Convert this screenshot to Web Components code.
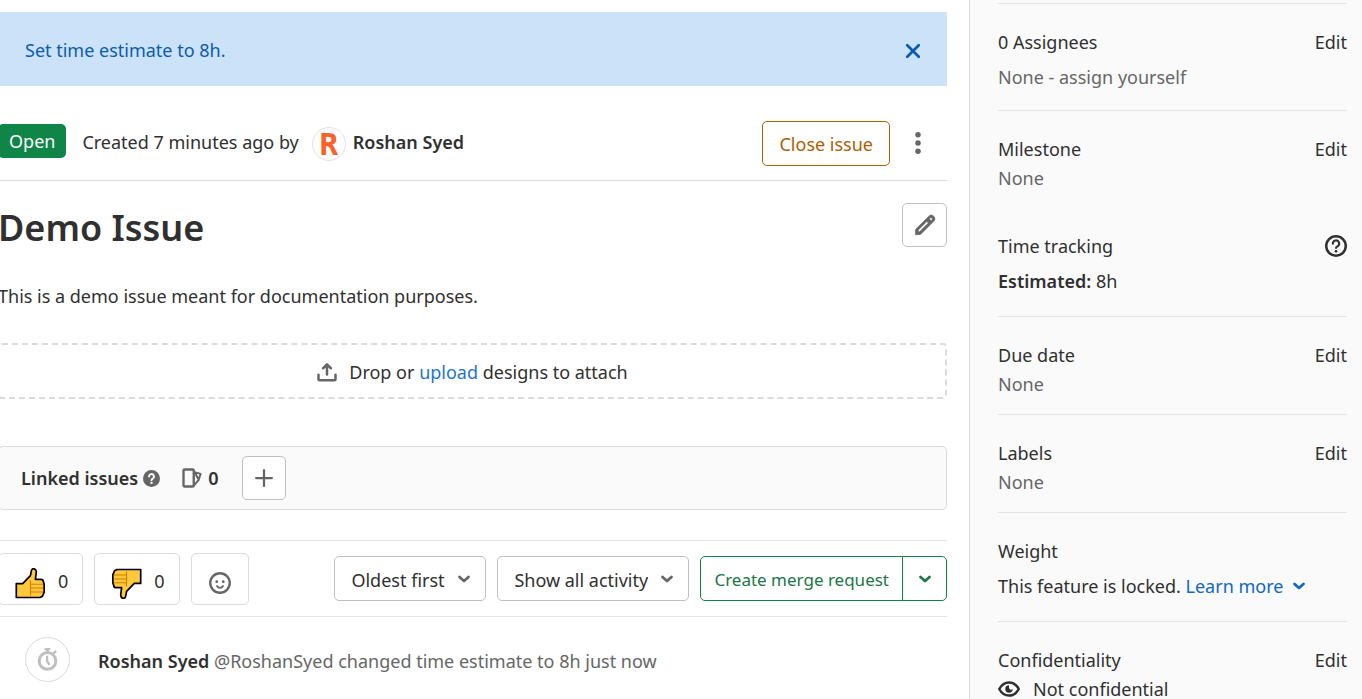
<!DOCTYPE html>
<html lang="en">
<head>
<meta charset="utf-8">
<title>Demo Issue</title>
<style>
  html, body { margin: 0; height: 100%; }
  body {
    overflow: hidden;
    background: #fff;
    color: #303030;
    font: 18px/28px "Noto Sans", "Open Sans", sans-serif;
  }
</style>
</head>
<body>
<issue-page></issue-page>

<script>
const define = (name, html, setup) => {
  const template = document.createElement('template');
  template.innerHTML = '<style>*{box-sizing:border-box}svg{display:block;flex:none}button,select{font:inherit;color:inherit;cursor:pointer}a{color:inherit;text-decoration:none}</style>' + html;
  customElements.define(name, class extends HTMLElement {
    constructor() {
      super();
      this.attachShadow({ mode: 'open' }).append(template.content.cloneNode(true));
      if (setup) setup(this, this.shadowRoot);
    }
  });
};

/* 16-unit icon set; every icon is drawn in currentColor */
const line = (d, w = 2) => `<path d="${d}" fill="none" stroke="currentColor" stroke-width="${w}" stroke-linecap="round" stroke-linejoin="round"/>`;
const icons = {
  close: line('M3.4 3.4l9.2 9.2M12.6 3.4l-9.2 9.2', 2.2),
  more: '<g fill="currentColor"><circle cx="8" cy="2" r="2"/><circle cx="8" cy="8" r="2"/><circle cx="8" cy="14" r="2"/></g>',
  pencil: '<path fill="currentColor" fill-rule="evenodd" d="M14.4 1.6a2.6 2.6 0 0 0-3.7 0L1.4 10.9a1.3 1.3 0 0 0-.4.9V15h3.2c.35 0 .67-.14.92-.38l9.28-9.3a2.6 2.6 0 0 0 0-3.7zM9.3 5.5l1.1 1.1-6.2 6.2-1.1.1.1-1.3zM12.4 2.7a1 1 0 1 1 0 2 1 1 0 0 1 0-2z" stroke="currentColor" stroke-width=".4"/>',
  upload: line('M1.2 10.2V13.6a1 1 0 0 0 1 1h11.6a1 1 0 0 0 1-1V10.2', 2) + line('M8 10V2.4M4.9 5L8 1.9 11.1 5', 2),
  help: '<circle cx="8" cy="8" r="8" fill="currentColor"/><path d="M5.7 6.2a2.3 2.3 0 1 1 3.5 1.9c-.8.5-1.2.8-1.2 1.5" fill="none" stroke="#fafafa" stroke-width="1.8" stroke-linecap="round"/><circle cx="8" cy="12.1" r="1.15" fill="#fafafa"/>',
  helpo: '<circle cx="8" cy="8" r="7.1" fill="none" stroke="currentColor" stroke-width="1.8"/>' + line('M5.7 6.3a2.3 2.3 0 1 1 3.5 1.9c-.8.5-1.2.7-1.2 1.3', 1.5) + '<circle cx="8" cy="11.9" r="1" fill="currentColor"/>',
  issues: line('M2 1.2h6.6a.8.8 0 0 1 .8.8v12a.8.8 0 0 1-.8.8H2a.8.8 0 0 1-.8-.8V2a.8.8 0 0 1 .8-.8z', 1.9) + line('M10 3.4l4.9 1.3-1.7 5-3.4 4M10.6 4.2l2.6 5', 1.6),
  plus: line('M8 1v14M1 8h14'),
  smile: '<circle cx="8" cy="8" r="7.1" fill="none" stroke="currentColor" stroke-width="1.7"/><circle cx="5.6" cy="7" r="1" fill="currentColor"/><circle cx="10.4" cy="7" r="1" fill="currentColor"/>' + line('M5.8 10.2c.6 1 1.3 1.3 2.2 1.3s1.6-.3 2.2-1.3', 1.3),
  chevron: line('M4.4 6.4l3.6 3.2 3.6-3.2', 2.2),
  eye: '<path d="M.9 8C2.6 4.9 5.1 3.2 8 3.2S13.4 4.9 15.1 8c-1.7 3.1-4.2 4.8-7.1 4.8S2.6 11.1.9 8z" fill="none" stroke="currentColor" stroke-width="1.8" stroke-linejoin="round"/><path fill="currentColor" d="M8 5.3a2.7 2.7 0 1 0 2.7 2.7A1.6 1.6 0 0 1 8 6.6z"/>',
  timer: '<circle cx="8" cy="9" r="5.8" fill="none" stroke="currentColor" stroke-width="2.1"/><path d="M6 0h4v1.4H9V3H7V1.4H6z" fill="currentColor"/>' + line('M12.6 3.4l.9-.9', 1.7) + line('M7.7 6v3.2l1.5 2', 1.6),
  thumb: '<path d="M1.3 15.6h6.4l7.7-7.9 1-5C16.8.8 18 .5 19.3.9c1.5.5 2 1.7 2 3.2l-.9 7.2h5.2c1.5 0 2.7.8 2.7 2.3l.8 2.3.1 8.3-1.7 4-2.5 1.3H1.3z" fill="#ffc83d" stroke="#000" stroke-width="1.7" stroke-linejoin="round"/><path d="M15.5 12.5v15M16 16.2h12M16 20h12M16 24h12" fill="none" stroke="#d67d00" stroke-width="1.1"/>'
};

define('ui-icon', '<style>:host{display:block;flex:none}</style><span></span>', (host, root) => {
  const name = host.getAttribute('name'), size = host.getAttribute('size') || 20;
  root.querySelector('span').innerHTML = `<svg width="${size}" height="${size}" viewBox="${name === 'thumb' ? '0 0 31 31' : '0 0 16 16'}" aria-hidden="true" style="display:block">${icons[name]}</svg>`;
});

define('alert-banner', `
<style>
  :host { display: flex; align-items: center; justify-content: space-between; min-height: 74px; padding: 2px 24px 0 27px; background: #cbe2f9; color: #0b5cad; }
  button { display: grid; padding: 2px 0 0; border: 0; background: none; }
</style>
<slot></slot><button aria-label="Dismiss"><ui-icon name="close" size="20"></ui-icon></button>`);

define('issue-header', `
<style>
  :host { display: flex; align-items: center; height: 95px; padding: 20px 18px 0 0; border-bottom: 1px solid #dbdbdb; }
  .badge { padding: 3px 11px; margin-bottom: 4px; border-radius: 5px; background: #108548; color: #fff; }
  .by { display: flex; align-items: center; flex: 1; margin: 0 0 2px 16px; }
  .avatar { display: grid; place-items: center; width: 34px; height: 34px; margin: 4px 7px 0 13px; border: 1px solid #e3e3e3; border-radius: 50%; background: #fdfdfd; color: #fc6026; font: bold 31px/32px "DejaVu Sans Mono", monospace; }
  .name { font-weight: 600; }
  .close { height: 45px; padding: 2px 16px 0; border: 1px solid #ab6100; border-radius: 5px; background: #fff; color: #ab6100; }
  .more { display: grid; padding: 0; margin-left: 17px; border: 0; background: none; color: #666; }
</style>
<span class="badge">Open</span>
<div class="by">Created 7 minutes ago by <span class="avatar" aria-hidden="true">R</span><a class="name" href="#user">Roshan Syed</a></div>
<button class="close">Close issue</button>
<button class="more" aria-label="More actions"><ui-icon name="more" size="22"></ui-icon></button>`);

define('issue-body', `
<style>
  :host { display: block; }
  .title { display: flex; justify-content: space-between; align-items: start; height: 44px; margin-top: 22px; }
  h1 { margin: 0; font-size: 36px; line-height: 44px; font-weight: 600; padding-top: 3px; }
  button { display: grid; place-items: center; width: 45px; height: 44px; padding: 0; border: 1px solid #bfbfbf; border-radius: 5px; background: #fff; color: #666; }
  p { margin: 35px 0 33px; }
  .drop { display: flex; align-items: center; justify-content: center; gap: 12px; height: 56px; padding-top: 2px; border: 2px dashed #dbdbdb; border-radius: 4px; }
  ui-icon { color: #666; }
  .drop a { color: #1f75cb; }
</style>
<div class="title"><h1>Demo Issue</h1><button aria-label="Edit title and description"><ui-icon name="pencil" size="22"></ui-icon></button></div>
<p>This is a demo issue meant for documentation purposes.</p>
<div class="drop"><ui-icon name="upload" size="20"></ui-icon><span>Drop or <a href="#upload">upload</a> designs to attach</span></div>`);

define('linked-issues', `
<style>
  :host { display: flex; align-items: center; height: 64px; margin-top: 47px; padding: 0 22px; border: 1px solid #dbdbdb; border-radius: 5px; background: #fafafa; }
  h2 { margin: 0; font-size: 18px; line-height: 28px; font-weight: 600; }
  ui-icon { color: #666; }
  .help { margin-left: 5px; }
  .count { display: flex; align-items: center; gap: 6px; margin: 0 23px 0 22px; font-weight: 600; }
  button { display: grid; place-items: center; width: 44px; height: 44px; padding: 0; border: 1px solid #bfbfbf; border-radius: 5px; background: #fff; }
</style>
<h2>Linked issues</h2><ui-icon class="help" name="help" size="17"></ui-icon>
<span class="count"><ui-icon name="issues" size="20"></ui-icon>0</span>
<button aria-label="Add a related issue"><ui-icon name="plus" size="18"></ui-icon></button>`);

define('award-button', `
<style>
  :host { display: block; }
  button { display: flex; align-items: center; justify-content: center; gap: 12px; height: 52px; min-width: 58px; padding: 4px 14px 0 16px; border: 1px solid #dbdbdb; border-radius: 5px; background: #fff; color: #303030; }
  :host([icon]) button { padding: 8px 0 0; color: #666; }
  ::slotted(ui-icon) { margin-top: 6px; }
  :host([icon]) ::slotted(ui-icon) { margin-top: 0; }
  ::slotted(.down) { transform: rotate(180deg); }
</style>
<button><slot></slot></button>`);

define('filter-select', `
<style>
  :host { display: grid; align-items: center; }
  select { grid-area: 1 / 1; height: 45px; padding: 2px 40px 0 16px; border: 1px solid #bfbfbf; border-radius: 5px; background: #fff; color: #303030; appearance: none; }
  ui-icon { grid-area: 1 / 1; justify-self: end; margin-right: 12px; color: #666; pointer-events: none; }
</style>
<select><option></option></select><ui-icon name="chevron" size="20"></ui-icon>`, (host, root) => {
  root.querySelector('option').textContent = host.getAttribute('label');
  root.querySelector('select').setAttribute('aria-label', host.getAttribute('purpose'));
});

define('merge-button', `
<style>
  :host { display: flex; color: #217645; font-size: 17px; }
  button { display: grid; place-items: center; height: 45px; padding: 2px 13px 0; border: 1px solid #108548; background: #fff; }
  .main { border-radius: 5px 0 0 5px; }
  .toggle { width: 45px; padding: 0; margin-left: -1px; border-radius: 0 5px 5px 0; }
</style>
<button class="main">Create merge request</button><button class="toggle" aria-label="Merge request options"><ui-icon name="chevron" size="20"></ui-icon></button>`);

define('activity-bar', `
<style>
  :host { display: flex; align-items: center; justify-content: space-between; height: 77px; margin-top: 30px; border: solid #e5e5e5; border-width: 1px 0; }
  div { display: flex; align-items: center; gap: 11px; }
</style>
<div>
  <award-button><ui-icon name="thumb" size="31"></ui-icon><span>0</span></award-button>
  <award-button><ui-icon class="down" name="thumb" size="31"></ui-icon><span>0</span></award-button>
  <award-button icon><ui-icon name="smile" size="22"></ui-icon></award-button>
</div>
<div>
  <filter-select label="Oldest first" purpose="Sort order"></filter-select>
  <filter-select label="Show all activity" purpose="Activity filter"></filter-select>
  <merge-button></merge-button>
</div>`);

define('system-note', `
<style>
  :host { display: flex; align-items: center; gap: 28px; margin-top: 20px; padding-left: 27px; color: #666; }
  .mark { display: grid; place-items: center; width: 45px; height: 45px; border: 1px solid #dbdbdb; border-radius: 50%; color: #bfbfbf; }
  a { color: #303030; font-weight: 600; }
  .text { padding-top: 3px; }
</style>
<span class="mark"><ui-icon name="timer" size="23"></ui-icon></span>
<span class="text"><a href="#user">Roshan Syed</a> <slot></slot></span>`);

define('side-field', `
<style>
  :host { display: block; padding: 24px 0 16px; border-bottom: 1px solid #e5e5e5; }
  :host([roomy]) { padding-bottom: 21px; }
  :host([empty][roomy]) { padding-bottom: 19px; }
  :host([plain]) { border-bottom: 0; }
  header { display: flex; align-items: center; justify-content: space-between; margin-bottom: 1px; }
  :host([roomy]) header { margin-bottom: 7px; }
  .value { display: flex; align-items: center; }
  :host([empty]) .value { color: #666; }
</style>
<header><span class="label"></span><slot name="action"><a href="#edit">Edit</a></slot></header>
<div class="value"><slot></slot></div>`, (host, root) => {
  root.querySelector('.label').textContent = host.getAttribute('label');
});

define('issue-sidebar', `
<style>
  :host { display: block; padding: 3px 15px 0 28px; border-left: 1px solid #dbdbdb; background: #fafafa; }
  .list { border-top: 1px solid #e5e5e5; }
  b { font-weight: 600; }
  .text { white-space: pre; }
  .learn { display: flex; align-items: center; gap: 6px; padding: 0; border: 0; background: none; color: #1068bf; }
  .eye { margin-right: 13px; }
</style>
<div class="list">
  <side-field label="0 Assignees" roomy empty><span>None - <a href="#assign">assign yourself</a></span></side-field>
  <side-field label="Milestone" plain empty>None</side-field>
  <side-field label="Time tracking" roomy><ui-icon slot="action" name="helpo" size="22"></ui-icon><span><b>Estimated:</b> 8h</span></side-field>
  <side-field label="Due date" empty>None</side-field>
  <side-field label="Labels" empty>None</side-field>
  <side-field label="Weight" roomy><span slot="action"></span><span class="text">This feature is locked. </span><button class="learn">Learn more <ui-icon name="chevron" size="20"></ui-icon></button></side-field>
  <side-field label="Confidentiality"><ui-icon class="eye" name="eye" size="22"></ui-icon>Not confidential</side-field>
</div>`);

define('issue-page', `
<style>
  :host { display: grid; grid-template-columns: minmax(0, 1fr) 393px; min-height: 100%; }
  main { padding: 12px 22px 0 0; margin-left: -2px; }
</style>
<main>
  <alert-banner>Set time estimate to 8h.</alert-banner>
  <issue-header></issue-header>
  <issue-body></issue-body>
  <linked-issues></linked-issues>
  <activity-bar></activity-bar>
  <system-note>@RoshanSyed changed time estimate to 8h just now</system-note>
</main>
<issue-sidebar></issue-sidebar>`);
</script>
</body>
</html>
